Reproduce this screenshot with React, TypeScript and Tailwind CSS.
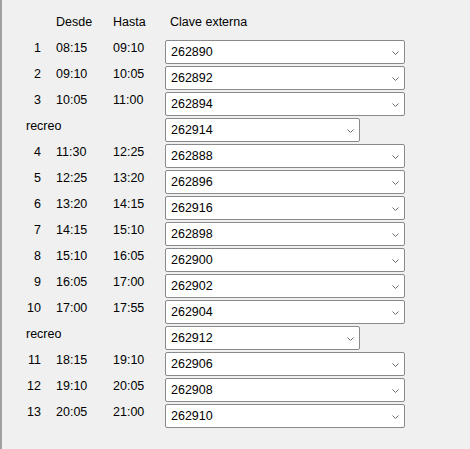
import React from "react";

type Row =
  | { kind: "hour"; n: number; from: string; to: string; code: string }
  | { kind: "break"; code: string };

const rows: Row[] = [
  { kind: "hour", n: 1, from: "08:15", to: "09:10", code: "262890" },
  { kind: "hour", n: 2, from: "09:10", to: "10:05", code: "262892" },
  { kind: "hour", n: 3, from: "10:05", to: "11:00", code: "262894" },
  { kind: "break", code: "262914" },
  { kind: "hour", n: 4, from: "11:30", to: "12:25", code: "262888" },
  { kind: "hour", n: 5, from: "12:25", to: "13:20", code: "262896" },
  { kind: "hour", n: 6, from: "13:20", to: "14:15", code: "262916" },
  { kind: "hour", n: 7, from: "14:15", to: "15:10", code: "262898" },
  { kind: "hour", n: 8, from: "15:10", to: "16:05", code: "262900" },
  { kind: "hour", n: 9, from: "16:05", to: "17:00", code: "262902" },
  { kind: "hour", n: 10, from: "17:00", to: "17:55", code: "262904" },
  { kind: "break", code: "262912" },
  { kind: "hour", n: 11, from: "18:15", to: "19:10", code: "262906" },
  { kind: "hour", n: 12, from: "19:10", to: "20:05", code: "262908" },
  { kind: "hour", n: 13, from: "20:05", to: "21:00", code: "262910" },
];

function Combo({ value, short = false }: { value: string; short?: boolean }) {
  return (
    <div
      className={`flex items-center justify-between h-[24px] ${
        short ? "w-[195px]" : "w-[240px]"
      } bg-white border border-[#8a8a8a] rounded-[2px] pl-[5px] pr-[5px]`}
    >
      <span className="leading-[15px]">{value}</span>
      <svg width="7" height="4" viewBox="0 0 7 4" className="mt-[1px]">
        <polyline
          points="0.5,0.5 3.5,3.5 6.5,0.5"
          fill="none"
          stroke="#6d6d6d"
          strokeWidth="1"
        />
      </svg>
    </div>
  );
}

export default function App() {
  return (
    <div className="w-[470px] h-[449px] bg-[#f0f0f0] border-l-2 border-[#a0a0a0] text-black text-[12.5px] font-['Liberation_Sans',Arial,sans-serif]">
      {/* header */}
      <div className="flex pt-[15px] leading-[15px]">
        <div className="w-[39px]" />
        <div className="ml-[15px] w-[57px]">Desde</div>
        <div className="w-[52px]">Hasta</div>
        <div className="pl-[5px]">Clave externa</div>
      </div>

      <div className="mt-[10px] flex flex-col gap-[2px]">
        {rows.map((row, i) =>
          row.kind === "hour" ? (
            <div key={i} className="flex h-[24px]">
              <div className="w-[39px] text-right pt-[1px] leading-[15px]">
                {row.n}
              </div>
              <div className="ml-[15px] w-[57px] pt-[1px] leading-[15px]">
                {row.from}
              </div>
              <div className="w-[52px] pt-[1px] leading-[15px]">{row.to}</div>
              <Combo value={row.code} />
            </div>
          ) : (
            <div key={i} className="flex h-[24px]">
              <div className="w-[163px] pl-[24px] pt-[1px] leading-[15px]">
                recreo
              </div>
              <Combo value={row.code} short />
            </div>
          )
        )}
      </div>
    </div>
  );
}
